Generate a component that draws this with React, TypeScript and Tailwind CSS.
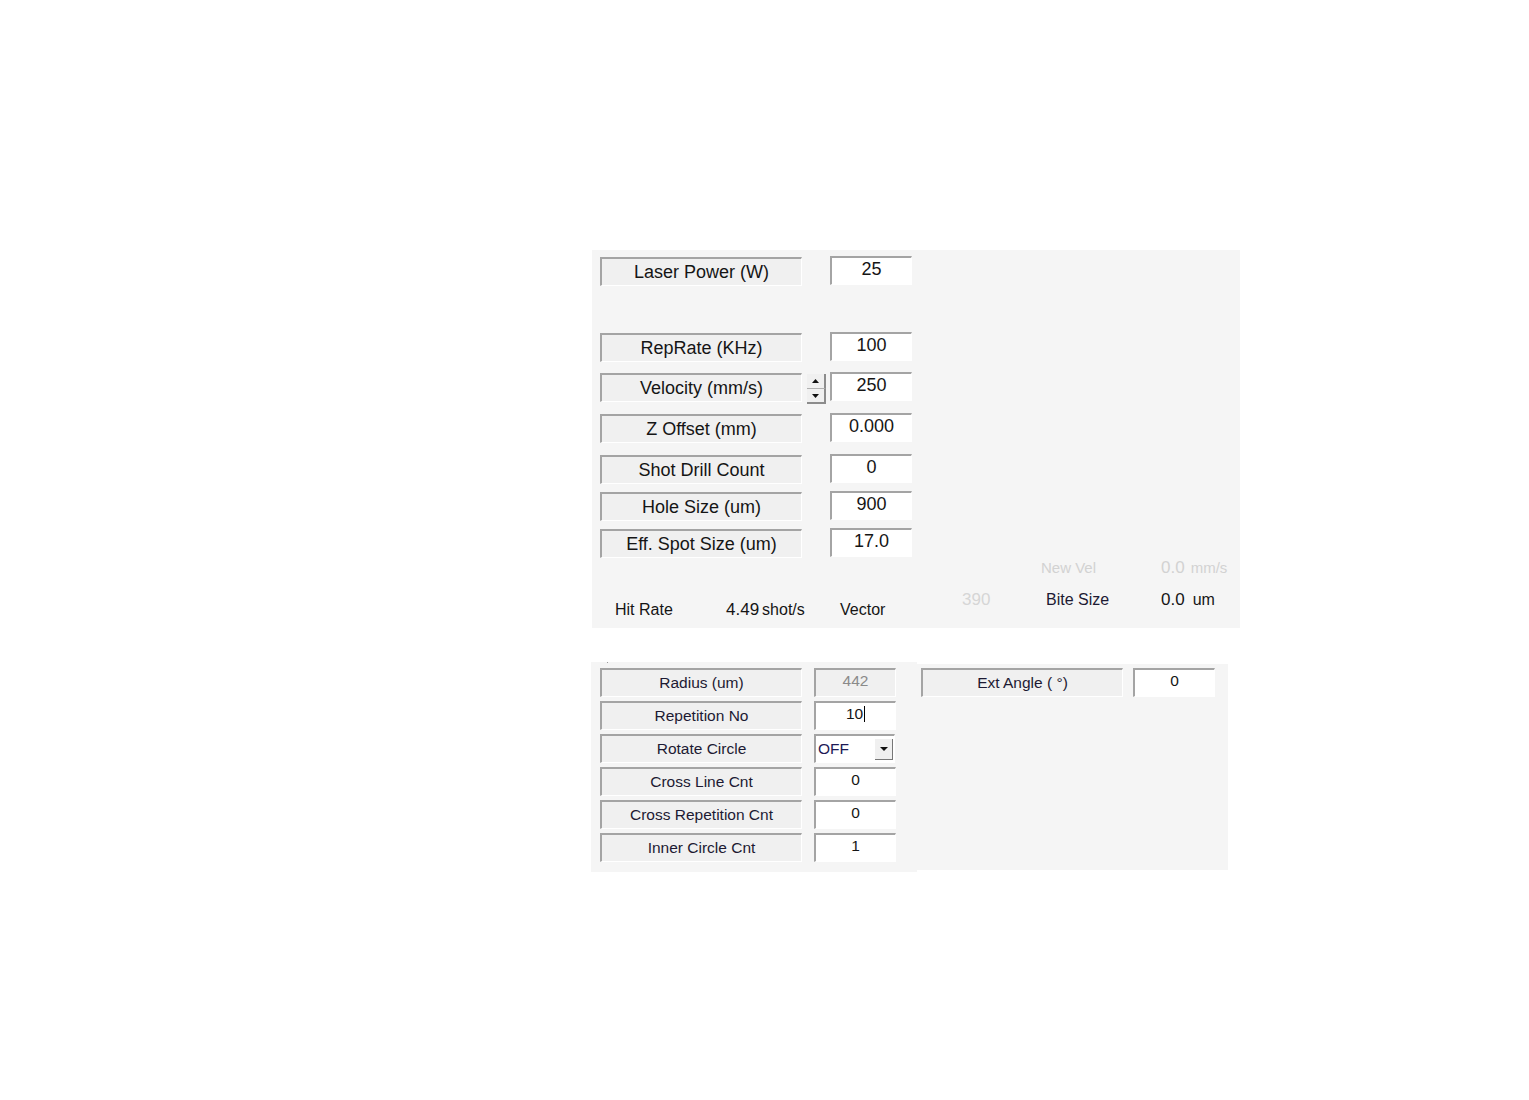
import React from 'react';

const sunken =
  'border-t-2 border-l-2 border-b border-r border-t-[#a4a4a4] border-l-[#a4a4a4] border-b-white border-r-white';

function Label({ text, small }: { text: string; small?: boolean }) {
  return (
    <div
      className={`flex h-[29px] w-[202px] shrink-0 items-center justify-center bg-[#f0f0f0] ${sunken} ${
        small ? 'text-[15.5px] text-[#1d1a33]' : 'text-[18px] text-[#151515]'
      }`}
    >
      {text}
    </div>
  );
}

function Field({ value, small, disabled }: { value: string; small?: boolean; disabled?: boolean }) {
  return (
    <div
      className={`flex h-[29px] w-[82px] shrink-0 items-center justify-center pb-[4px] ${sunken} ${
        disabled ? 'bg-[#f0f0f0] text-[#8a8a8a]' : 'bg-white text-[#151515]'
      } ${small ? 'text-[15.5px]' : 'text-[18px]'}`}
    >
      {value}
    </div>
  );
}

function Spinner() {
  return (
    <div className="ml-[5px] mr-[4px] flex w-[19px] flex-col pt-[1px]">
      <div className="flex h-[15px] items-center justify-center border-r-2 border-b border-r-[#8c8c8c] border-b-[#b0b0b0] bg-[#f0f0f0]">
        <svg width="7" height="4" viewBox="0 0 7 4">
          <path d="M0 4 L3.5 0 L7 4 Z" fill="#111" />
        </svg>
      </div>
      <div className="flex h-[15px] items-center justify-center border-r-2 border-b-2 border-r-[#8c8c8c] border-b-[#8c8c8c] bg-[#f0f0f0]">
        <svg width="7" height="4" viewBox="0 0 7 4">
          <path d="M0 0 L3.5 4 L7 0 Z" fill="#111" />
        </svg>
      </div>
    </div>
  );
}

function TopRow({ label, value, mt, spin }: { label: string; value: string; mt: string; spin?: boolean }) {
  return (
    <div className={`flex items-start ${mt}`}>
      <Label text={label} />
      {spin ? <Spinner /> : <div className="w-[28px]" />}
      <div className="-mt-[1px]">
        <Field value={value} />
      </div>
    </div>
  );
}

function LowRow({ label, children }: { label: string; children: React.ReactNode }) {
  return (
    <div className="flex items-start gap-[12px]">
      <Label text={label} small />
      {children}
    </div>
  );
}

export default function App() {
  return (
    <div className="min-h-[1100px] bg-white font-[Liberation_Sans,Arial,sans-serif] pt-[250px]">
      {/* Main parameter panel */}
      <div className="ml-[592px] h-[378px] w-[648px] bg-[#f5f5f5] pl-[8px] pt-[7px]">
        <TopRow label="Laser Power (W)" value="25" mt="mt-0" />
        <TopRow label="RepRate (KHz)" value="100" mt="mt-[47px]" />
        <TopRow label="Velocity (mm/s)" value="250" mt="mt-[11px]" spin />
        <TopRow label="Z Offset (mm)" value="0.000" mt="mt-[10px]" />
        <TopRow label="Shot Drill Count" value="0" mt="mt-[12px]" />
        <TopRow label="Hole Size (um)" value="900" mt="mt-[8px]" />
        <TopRow label="Eff. Spot Size (um)" value="17.0" mt="mt-[8px]" />

        <div className="flex items-start">
          <div className="mt-[42px] flex items-center pl-[15px] text-[16px] leading-[20px] text-[#151515]">
            <div className="w-[111px]">Hit Rate</div>
            <div className="w-[114px]">
              <span className="text-[17px]">4.49</span>
              <span className="ml-[3px]">shot/s</span>
            </div>
            <div className="w-[122px]">Vector</div>
          </div>
          <div className="flex flex-col">
            <div className="flex text-[15px] leading-[20px] text-[#d2d2d2]">
              <div className="w-[79px]" />
              <div className="w-[120px]">New Vel</div>
              <div>
                <span className="text-[17px]">0.0</span>
                <span className="ml-[6px]">mm/s</span>
              </div>
            </div>
            <div className="mt-[12px] flex items-center text-[16px] leading-[20px]">
              <div className="w-[84px] text-[17px] text-[#d6d6d6]">390</div>
              <div className="w-[115px] text-[#1d1a33]">Bite Size</div>
              <div className="text-[#151515]">
                <span className="text-[17px]">0.0</span>
                <span className="ml-[8px]">um</span>
              </div>
            </div>
          </div>
        </div>
      </div>

      {/* Circle parameters */}
      <div className="mt-[34px] ml-[591px] flex items-start">
        <div className="relative flex h-[210px] w-[326px] flex-col gap-[4px] bg-[#f5f5f5] pl-[9px] pt-[6px]">
          <div className="absolute left-[16px] top-0 h-[1px] w-[1px] bg-[#9a9a9a]" />
          <LowRow label="Radius (um)">
            <Field value="442" small disabled />
          </LowRow>
          <LowRow label="Repetition No">
            <div className={`flex h-[29px] w-[82px] items-center justify-center bg-white pb-[4px] text-[15.5px] text-[#151515] ${sunken}`}>
              <span>10</span>
              <span className="ml-[1px] h-[16px] w-[1px] bg-black" />
            </div>
          </LowRow>
          <LowRow label="Rotate Circle">
            <div className={`flex h-[29px] w-[81px] items-start justify-between bg-white pl-[2px] pt-[1px] text-[15.5px] text-[#1d1a55] ${sunken}`}>
              <span>OFF</span>
              <div className="mr-[1px] mt-[2px] flex h-[21px] w-[18px] items-center justify-center border-r border-b border-r-[#777] border-b-[#777] bg-[#f0f0f0]">
                <svg width="8" height="4" viewBox="0 0 8 4">
                  <path d="M0 0 L4 4 L8 0 Z" fill="#111" />
                </svg>
              </div>
            </div>
          </LowRow>
          <LowRow label="Cross Line Cnt">
            <Field value="0" small />
          </LowRow>
          <LowRow label="Cross Repetition Cnt">
            <Field value="0" small />
          </LowRow>
          <LowRow label="Inner Circle Cnt">
            <Field value="1" small />
          </LowRow>
        </div>
        <div className="mt-[2px] flex h-[206px] w-[311px] items-start gap-[10px] bg-[#f5f5f5] pl-[4px] pt-[4px]">
          <Label text="Ext Angle ( °)" small />
          <Field value="0" small />
        </div>
      </div>
    </div>
  );
}
